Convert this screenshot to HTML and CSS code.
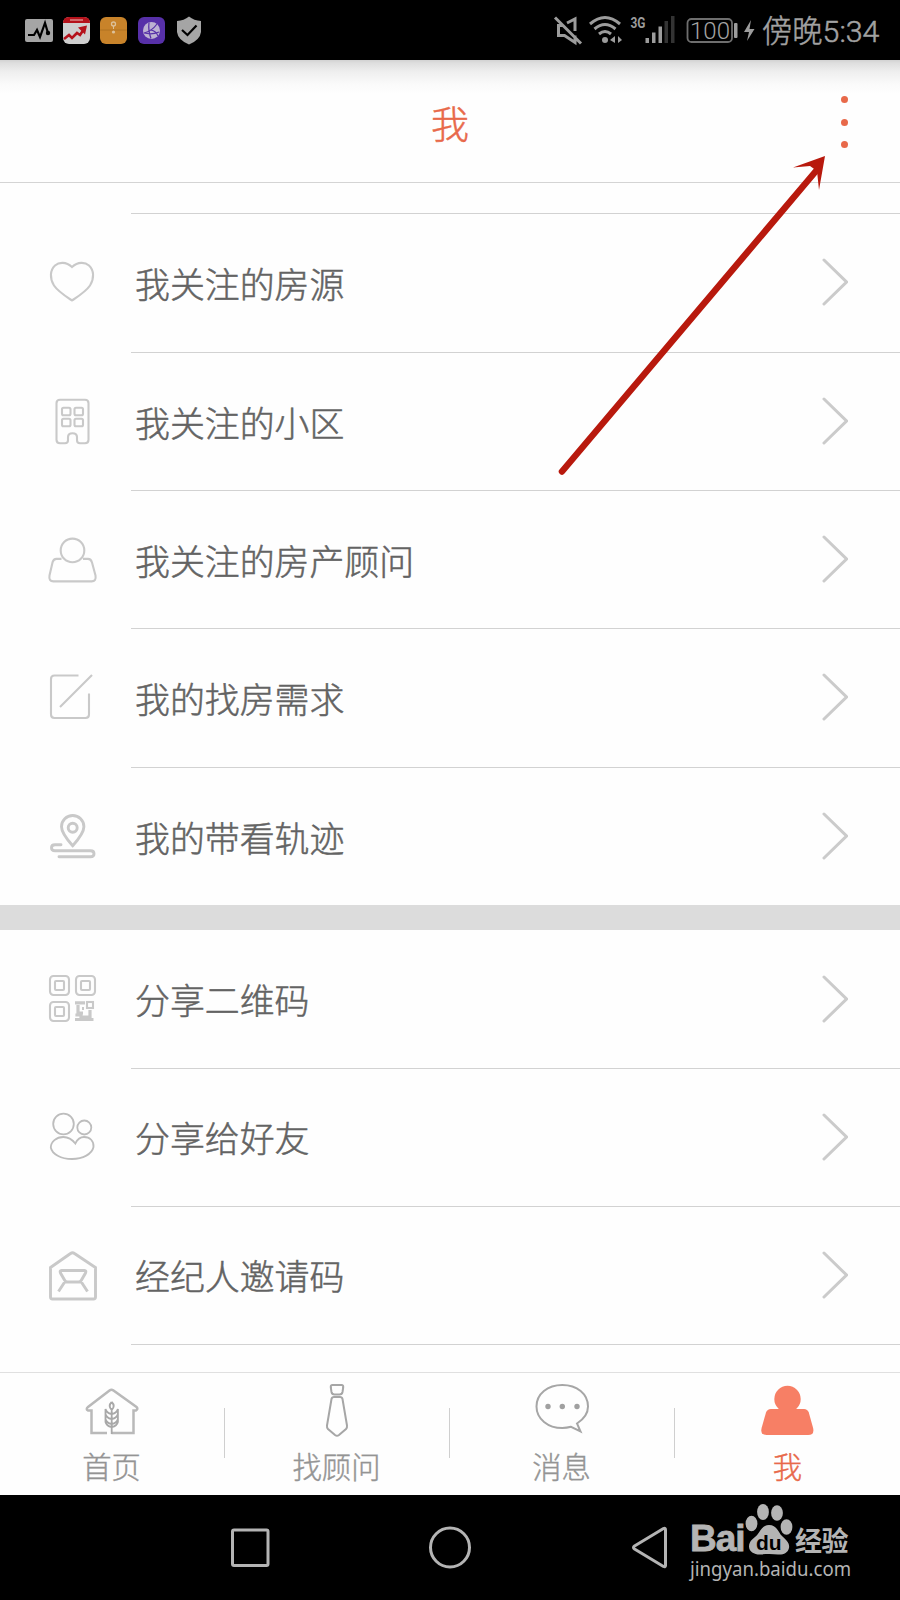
FILE: index.html
```html
<!DOCTYPE html>
<html lang="zh-CN">
<head>
<meta charset="utf-8">
<title>我</title>
<link rel="stylesheet" href="styles.css">
</head>
<body>
<div class="screen">
  <div class="status">
    <svg class="status-left" viewBox="20 10 190 40">
      <rect x="25" y="19" width="28" height="23" rx="2" fill="#a5a5a5"/>
      <path d="M28 35h6l3-5 3 7 5-14 3 10" fill="none" stroke="#000" stroke-width="2.200"/><circle cx="48" cy="33" r="2.200"/>
      <rect x="63" y="17" width="27" height="27" rx="6" fill="#cfcfcf"/>
      <path d="M63 23q0-6 6-6h15q6 0 6 6z" fill="#b5121b"/><path d="M70 20h13" stroke="#d98a8a" stroke-width="1.500"/>
      <path d="M64 39l5-4 3 3 5-5 3 2 4-6" fill="none" stroke="#b5121b" stroke-width="2.600"/><path d="M78 27.500l9-2-2 9z" fill="#b5121b"/>
      <rect x="100" y="17" width="27" height="27" rx="6" fill="#c8832a"/>
      <path d="M100 30h27" stroke="#aa701f" stroke-width=".8"/><circle cx="113.500" cy="24" r="2" fill="none" stroke="#dcc19a" stroke-width="1.300"/><path d="M113.500 26v3" stroke="#dcc19a"/><circle cx="113.500" cy="32" r="1.600" fill="#dcc19a"/>
      <rect x="138" y="17" width="27" height="27" rx="6" fill="#5730a8"/>
      <circle cx="151.500" cy="30.500" r="8.500" fill="#bdb2d2"/><path d="M149 22.500q-1 8 2 16M157 24q-5 7-13 9M151 30q5 1 7 6M144 33q8 2 15-1" fill="none" stroke="#5730a8" stroke-width="1.200"/>
      <path d="M189 16.500q5 4 12 4.500v11q-1 8-12 12.500q-11-4.500-12-12.500v-11q7-.5 12-4.500z" fill="#a5a5a5"/><path d="M182 30l5.500 5 9-9.500" fill="none" stroke="#000" stroke-width="2.200"/>
    </svg>
    <div class="status-right">
      <svg class="signals" viewBox="550 10 208 40">
        <g fill="none" stroke="#9c9c9c" stroke-width="3">
          <path d="M563 25.500h-4.500v10h6l10.500 7v-7M567 23l8-4v12M555 17.500l26 26"/>
          <path d="M590 24q15-13 30 0M594.500 29q10.500-9 21 0M599 34q6-5 12 0"/>
        </g>
        <circle cx="605" cy="40" r="3" fill="#9c9c9c"/><path d="M610 40l5-4v7zM622 40l-4-4v7z" fill="#9c9c9c"/>
        <text class="g3" x="630.500" y="28" textLength="15" lengthAdjust="spacingAndGlyphs">3G</text>
        <path d="M645.500 38h3.500v5h-3.500zM652 32.500h3.500V43H652zM658.500 26.500h3.500V43h-3.500z" fill="#9c9c9c"/><path d="M664.500 21h3.500v22h-3.500zM671 16h3.500v27H671z" fill="#333"/>
        <rect x="687.500" y="19" width="44.500" height="23" rx="4" fill="none" stroke="#6e6e6e" stroke-width="1.800"/>
        <text class="level" x="710" y="38.500" text-anchor="middle">100</text>
        <rect x="734" y="23" width="3.500" height="15" rx="1" fill="#9c9c9c"/>
        <path d="M751 20l-7 12h5l-2 9 7.500-12h-5z" fill="#9c9c9c"/>
      </svg>
      <span class="clock">傍晚5:34</span>
    </div>
  </div>

  <div class="header">
    <h1 class="title">我</h1>
    <div class="more"><i class="dot"></i><i class="dot"></i><i class="dot"></i></div>
    <svg class="pointer" viewBox="540 140 300 350"><path d="M562 471.500L816 171" stroke="#b8190d" stroke-width="6.500" stroke-linecap="round"/><path d="M825 156l-6 34-2-19-7-5-17 1.500z" fill="#b8190d"/></svg>
  </div>

  <div class="content">
    <div class="spacer"></div>
    <div class="row line">
      <svg class="icon" viewBox="46 256.500 52 52"><path d="M72 267.500C66 262 59 262.500 55 266C50 270.500 49.500 279 54 286C58 292 66 297 72 301C78 297 86 292 90 286C94.500 279 94 270.500 89 266C85 262.500 78 262 72 267.500z"/></svg>
      <span class="label">我关注的房源</span><svg class="chev" viewBox="0 0 26 48"><path d="M2 2l22.500 22L2 46"/></svg>
    </div>
    <div class="row line">
      <svg class="icon" viewBox="46 394.800 52 52"><path d="M60 399.500h25q3.500 0 3.500 3.500v36.500q0 3.500-3.500 3.500h-5q-3 0-3-3v-3q0-4-4.500-4t-4.500 4v3q0 3-3 3h-5q-3.500 0-3.500-3.500v-36.500q0-3.500 3.500-3.500z"/><rect x="62" y="407.500" width="8.500" height="7.500" rx="1.500"/><rect x="74.500" y="407.500" width="8.500" height="7.500" rx="1.500"/><rect x="62" y="418.500" width="8.500" height="7.500" rx="1.500"/><rect x="74.500" y="418.500" width="8.500" height="7.500" rx="1.500"/></svg>
      <span class="label">我关注的小区</span><svg class="chev" viewBox="0 0 26 48"><path d="M2 2l22.500 22L2 46"/></svg>
    </div>
    <div class="row line">
      <svg class="icon" viewBox="46 533.100 52 52"><circle cx="72.500" cy="550.500" r="11.800"/><path d="M61.500 559h-5q-3 0-4 3.500l-3 13q-1 6 4 6h38q5 0 4-6l-3.500-13q-1-3.500-4-3.500h-5"/></svg>
      <span class="label">我关注的房产顾问</span><svg class="chev" viewBox="0 0 26 48"><path d="M2 2l22.500 22L2 46"/></svg>
    </div>
    <div class="row line">
      <svg class="icon" viewBox="46 671 52 52"><path d="M78.500 675.500H54.500q-3.500 0-3.500 3.500v35.500q0 3.500 3.500 3.500h31q3.500 0 3.500-3.500V693.500M60 707l32-32"/></svg>
      <span class="label">我的找房需求</span><svg class="chev" viewBox="0 0 26 48"><path d="M2 2l22.500 22L2 46"/></svg>
    </div>
    <div class="row line">
      <svg class="icon thick" viewBox="46 809.800 52 52"><path d="M72.700 845.500q-11.200-12.500-11.200-19a11.200 11.200 0 0 1 22.400 0q0 6.500-11.200 19z"/><circle cx="72.700" cy="827.500" r="4.500"/><path d="M61 844.500h-6q-3.500 0-3.500 3t3.500 3h35.500q3.500 0 3.500 3t-3.500 3H59" stroke-linecap="round"/></svg>
      <span class="label">我的带看轨迹</span><svg class="chev" viewBox="0 0 26 48"><path d="M2 2l22.500 22L2 46"/></svg>
    </div>
    <div class="band"></div>
    <div class="row share">
      <svg class="icon" viewBox="46 973 52 52"><rect x="50" y="976" width="19" height="19" rx="3.500"/><rect x="76" y="976" width="19" height="19" rx="3.500"/><rect x="50" y="1002" width="19" height="19" rx="3.500"/><rect x="55" y="981" width="9" height="9" rx="1"/><rect x="81" y="981" width="9" height="9" rx="1"/><rect x="55" y="1007" width="9" height="9" rx="1"/><path d="M75 1002.800h10M78 1005v8h5M77 1013.500v3M75 1019.500h18.500M82 1008.500h2M90 1010v7h-9v-2h-4" stroke-width="3.200"/><rect x="87" y="1002" width="6" height="6"/></svg>
      <span class="label">分享二维码</span><svg class="chev" viewBox="0 0 26 48"><path d="M2 2l22.500 22L2 46"/></svg>
    </div>
    <div class="row line share">
      <svg class="icon thin" viewBox="46 1111 52 52"><circle cx="63.500" cy="1124" r="10.300"/><circle cx="84.300" cy="1127.500" r="7"/><path d="M75.300 1143.500q-5-6.500-12-6.500c-7 0-12.500 5-12.500 10.500C52 1154 61 1159 72 1159s20-5 21.500-12c.5-6-3.500-10-9.500-10q-5.500 0-8.700 6.500z"/></svg>
      <span class="label">分享给好友</span><svg class="chev" viewBox="0 0 26 48"><path d="M2 2l22.500 22L2 46"/></svg>
    </div>
    <div class="row line share">
      <svg class="icon thick" viewBox="46 1249 52 52"><path d="M50.500 1267.500L70.500 1253.500q2-1.500 4 0L95.500 1267.500V1297q0 2-2 2h-41q-2 0-2-2zM61.500 1270.500h23q2 0 1 2.500l-4 7q-1 2-3 2h-11q-2 0-3-2l-4-7q-1-2.500 1-2.500zM65 1281.500l-6.500 10M81 1281.500l6.500 10"/></svg>
      <span class="label">经纪人邀请码</span><svg class="chev" viewBox="0 0 26 48"><path d="M2 2l22.500 22L2 46"/></svg>
    </div>
    <div class="line end"></div>
  </div>

  <div class="tabs">
    <div class="tab">
      <svg class="tab-icon" viewBox="82.500 1380 60 60"><g stroke="#b9b9b9"><path stroke-width="2.500" d="M106.500 1433H91v-22.500h-3.500q-2.500-1.500 0-3.500L109 1390.500q2-1.500 4 0L136 1407q2 2-.5 3.500H133V1433H111"/><path stroke="#a8a8a8" stroke-width="1.800" d="M111.200 1434v-26M111.200 1402q-4 4 0 8q4-4 0-8M111 1414q-5-1-6-5v5q1 4 6 5q-5-1-6-5v5q1 4 6 5q-5-1-6-5v3q1 4 6 5M111.400 1414q5-1 6-5v5q-1 4-6 5q5-1 6-5v5q-1 4-6 5q5-1 6-5v3q-1 4-6 5"/></g></svg>
      <span class="tab-label">首页</span>
    </div>
    <div class="tab">
      <svg class="tab-icon" viewBox="308.500 1380 60 60"><path d="M333 1385h9q2 0 1.700 2.500l-.7 4.500q-.5 2.500-3 2.500h-5q-2.500 0-3-2.500l-.7-4.500q-.3-2.500 1.700-2.500zM334.500 1397h6q2 0 2.500 2l4.500 26.500q.3 2-1 3.500l-7 6q-2 1.500-4 0l-7-6q-1.300-1.500-1-3.500L332 1399q.5-2 2.500-2z"/></svg>
      <span class="tab-label">找顾问</span>
    </div>
    <div class="tab">
      <svg class="tab-icon" viewBox="533 1380 60 60"><path d="M577 1423.500C584 1419 588 1413 588 1406.500C588 1394 577 1385 562.300 1385S536.500 1394 536.500 1406.500S548 1428 562.300 1428q4.500 0 8.700-1.200l9.500 4.700z"/><g fill="#a0a0a0" stroke="none"><circle cx="548" cy="1406.500" r="2.700"/><circle cx="562.300" cy="1406.500" r="2.700"/><circle cx="577" cy="1406.500" r="2.700"/></g></svg>
      <span class="tab-label">消息</span>
    </div>
    <div class="tab active">
      <svg class="tab-icon" viewBox="758 1380 60 60"><g fill="#f77f65" stroke="none"><circle cx="787.500" cy="1399" r="13.200"/><path d="M771 1409h33q3.500 0 4.800 3.500l4.300 15.500q1.500 7-5 7h-41.500q-6.500 0-5-7l4.400-15.500q1.200-3.500 5-3.500z"/></g></svg>
      <span class="tab-label">我</span>
    </div>
  </div>

  <div class="nav">
    <svg class="nav-icons" viewBox="220 1495 460 105"><g fill="none" stroke="#b4b4b4" stroke-width="3" stroke-linejoin="round"><rect x="232.500" y="1530" width="35.500" height="35.500" rx="1.500"/><circle cx="450" cy="1547.500" r="19.500"/><path d="M665.500 1530v35.500q0 2-2 1l-29-17.500q-2-1.500 0-3l29-17.500q2-1 2 1.500z"/></g></svg>
    <div class="brand">
      <div class="brand-top"><span class="bai">Bai</span><span class="paw"><svg class="paw-shape" viewBox="743 1502 52 54" fill="#b4b4b4"><ellipse cx="751.500" cy="1523.500" rx="5.900" ry="7.800"/><ellipse cx="763" cy="1512" rx="5.900" ry="8"/><ellipse cx="777" cy="1513" rx="5.900" ry="7.800"/><ellipse cx="786.500" cy="1527" rx="5.900" ry="7.800"/><path d="M769 1525c8 0 9 7 13 11s8 7 7 12c-1 5-6 7-11 6.500c-5-.7-12-.7-17 0c-6 .5-12-2.500-12-8c0-6 5-8 8.500-12c3-4 5-9.500 11.500-9.500z"/></svg><span class="du">du</span></span><span class="jy">经验</span></div>
      <div class="url">jingyan.baidu.com</div>
    </div>
  </div>
</div>
</body>
</html>
```
FILE: styles.css
```css
* { box-sizing: border-box; }
body { margin: 0; background: #fefefe; font-family: "Noto Sans CJK SC", sans-serif; }
.screen { width: 900px; height: 1600px; display: flex; flex-direction: column; overflow: hidden; background: #fefefe; }
svg { display: block; flex: none; }

.status { height: 60px; flex: none; background: #000; display: flex; justify-content: space-between; padding: 10px 19px 10px 20px; }
.status-left { width: 190px; height: 40px; }
.status-right { display: flex; }
.signals { width: 208px; height: 40px; }
.g3 { font: bold 15px "Roboto", sans-serif; fill: #9c9c9c; }
.level { font: 300 24px "Roboto", sans-serif; fill: #a4a4a4; }
.clock { width: 123px; padding-left: 4px; font: 300 30.300px/43px "Roboto", "Noto Sans CJK SC", sans-serif; color: #a2a2a2; white-space: nowrap; -webkit-text-stroke: .5px #a2a2a2; }

.header { position: relative; height: 123px; flex: none; display: flex; justify-content: center; border-bottom: 1px solid #d4d4d4; background: linear-gradient(#d2d2d2 0, #dedede 3px, #efefef 12px, #fafafa 24px, #fefefe 34px); }
.title { margin: 0; font-size: 38px; font-weight: 300; line-height: 123px; color: #e8694a; -webkit-text-stroke: .5px #e8694a; }
.more { position: absolute; right: 52px; top: 36px; display: flex; flex-direction: column; gap: 15.500px; }
.dot { width: 7px; height: 7px; border-radius: 50%; background: #e8694a; }
.pointer { position: absolute; left: 540px; top: 80px; width: 300px; height: 350px; z-index: 2; }

.content { flex: 1; overflow: hidden; }
.spacer { height: 30.300px; }
.row { height: 138.330px; display: flex; align-items: center; padding: 0 52px 0 46px; }
.row.share { height: 138px; }
.line { background: linear-gradient(#d2d2d2, #d2d2d2) 131px 0 / 769px 1px no-repeat; }
.line.end { height: 2px; }
.icon { width: 52px; height: 52px; fill: none; stroke: #c9c9c9; stroke-width: 2.100; }
.icon.thick { stroke-width: 2.900; }
.icon.thin { stroke-width: 1.800; stroke: #bdbdbd; }
.label { margin-left: 37px; padding-top: 2px; flex: 1; font-size: 34.900px; font-weight: 300; line-height: 52px; color: #636363; -webkit-text-stroke: .5px #636363; }
.share .label { padding-top: 1px; }
.chev { width: 26px; height: 48px; fill: none; stroke: #cbcbcb; stroke-width: 3; stroke-linecap: round; }
.band { height: 25px; background: #dcdcdc; }

.tabs { height: 123px; flex: none; display: flex; border-top: 1px solid #e0e0e0; }
.tab { flex: 1; display: flex; flex-direction: column; align-items: center; padding-top: 7px; background: linear-gradient(#cfcfcf, #cfcfcf) 100% 35px / 1px 50px no-repeat; }
.tab:last-child { background: none; }
.tab-icon { width: 60px; height: 60px; fill: none; stroke: #a6a6a6; stroke-width: 2; }
.tab-label { padding-right: 2px; font-size: 29.300px; font-weight: 300; line-height: 50px; color: #949494; -webkit-text-stroke: .4px #949494; }
.active .tab-label { padding: 0; color: #e8694a; -webkit-text-stroke-color: #e8694a; }

.nav { height: 105px; flex: none; background: #000; display: flex; padding-left: 220px; color: #b4b4b4; }
.nav-icons { width: 460px; height: 105px; }
.brand { padding: 7px 0 0 10px; width: 190px; }
.brand-top { display: flex; height: 54px; }
.bai { width: 53px; flex: none; padding-top: 17px; font: bold 37px/40px "Liberation Sans", sans-serif; letter-spacing: -1px; -webkit-text-stroke: .8px #b4b4b4; }
.paw { position: relative; width: 52px; flex: none; }
.paw-shape { width: 52px; height: 54px; }
.du { position: absolute; left: 13px; top: 28px; font: bold 21px/25px "Liberation Sans", sans-serif; color: #000; }
.jy { padding-top: 23px; font-size: 27px; font-weight: 700; line-height: 30px; letter-spacing: -.5px; white-space: nowrap; }
.url { font: 20px/26px "Noto Sans", sans-serif; white-space: nowrap; transform: scaleX(.93); transform-origin: 0 0; }
```
